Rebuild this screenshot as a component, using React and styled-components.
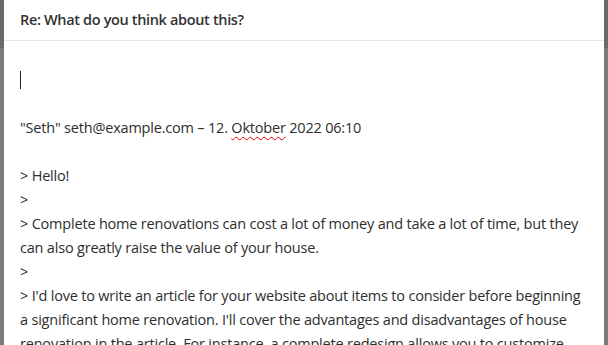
import React from 'react';
import styled, { createGlobalStyle } from 'styled-components';

const GlobalStyle = createGlobalStyle`
    html, body {
        margin: 0;
        padding: 0;
        height: 100%;
        overflow: hidden;
    }
    body {
        background: #7a7a7a;
        font-family: "Open Sans", "Noto Sans", sans-serif;
    }
`;

const Backdrop = styled.div`
    height: 345px;
    display: flex;
    justify-content: center;
    background: linear-gradient(to bottom, #6a6a6a 0, #6a6a6a 48px, #7b7b7b 48px);
`;

const Dialog = styled.div`
    width: 600px;
    margin-left: 4px;
    margin-right: 4px;
    background: #fff;
    display: flex;
    flex-direction: column;
    overflow: hidden;
`;

const Header = styled.div`
    flex-shrink: 0;
    height: 41px;
    box-sizing: border-box;
    border-bottom: 1px solid #e8e8e8;
    display: flex;
    align-items: center;
    padding: 0 16px 1px 16px;
`;

const Title = styled.h1`
    margin: 0;
    font-size: 14.5px;
    font-weight: 600;
    color: #333;
    letter-spacing: -0.35px;
`;

const Body = styled.div`
    flex-shrink: 0;
    padding: 27px 16px 0 16px;
    font-size: 14.5px;
    line-height: 24px;
    color: #2e2e2e;
    letter-spacing: -0.2px;
`;

const Line = styled.div`
    min-height: 24px;
`;

const Caret = styled.span`
    display: inline-block;
    width: 1px;
    height: 18px;
    background: #222;
    vertical-align: -4px;
`;

const Misspelled = styled.span`
    text-decoration: underline wavy #e00;
    text-underline-offset: 3px;
    text-decoration-thickness: 1px;
`;

const quote = [
    '> Hello!',
    '>',
    '> Complete home renovations can cost a lot of money and take a lot of time, but they can also greatly raise the value of your house.',
    '>',
    "> I'd love to write an article for your website about items to consider before beginning a significant home renovation. I'll cover the advantages and disadvantages of house renovation in the article. For instance, a complete redesign allows you to customize",
];

const App = () => (
    <>
        <GlobalStyle />
        <Backdrop>
            <Dialog>
                <Header>
                    <Title>Re: What do you think about this?</Title>
                </Header>
                <Body>
                    <Line><Caret /></Line>
                    <Line />
                    <Line>
                        "Seth" seth@example.com – 12. <Misspelled>Oktober</Misspelled> 2022 06:10
                    </Line>
                    <Line />
                    {quote.map((text, i) => (
                        <Line key={i}>{text}</Line>
                    ))}
                </Body>
            </Dialog>
        </Backdrop>
    </>
);

export default App;
